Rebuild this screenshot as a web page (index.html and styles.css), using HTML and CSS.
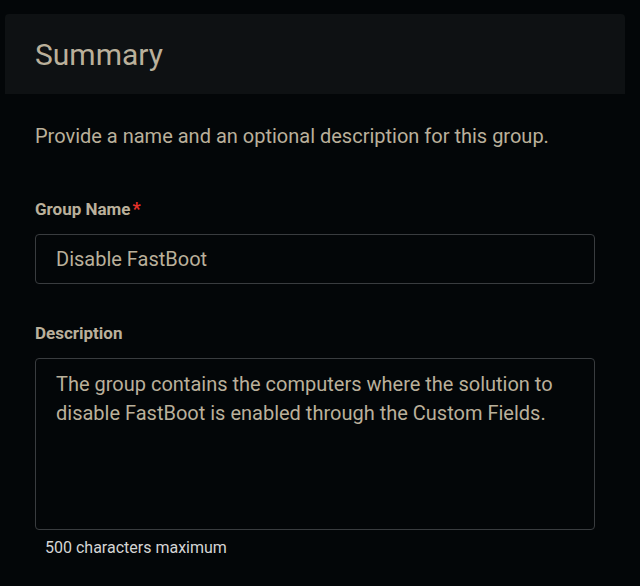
FILE: index.html
```html
<!DOCTYPE html>
<html>
<head>
<meta charset="utf-8">
<link rel="stylesheet" href="styles.css">
</head>
<body>
<div class="panel">
  <div class="panel-header">
    <h2 class="title">Summary</h2>
  </div>
  <div class="panel-body">
    <p class="intro">Provide a name and an optional description for this group.</p>
    <div class="field">
      <label class="label">Group Name<span class="req">*</span></label>
      <div class="input">Disable FastBoot</div>
    </div>
    <div class="field">
      <label class="label">Description</label>
      <div class="textarea">The group contains the computers where the solution to disable FastBoot is enabled through the Custom Fields.</div>
      <div class="hint">500 characters maximum</div>
    </div>
  </div>
</div>
</body>
</html>
```
FILE: styles.css
```css
html, body {
  margin: 0;
  padding: 0;
  background: #030608;
  font-family: Roboto, "Liberation Sans", sans-serif;
  color: #bab09b;
}
.panel {
  padding: 14px 15px 0 5px;
}
.panel-header {
  background: #0e1113;
  border-radius: 4px 4px 0 0;
  height: 80px;
  display: flex;
  align-items: center;
  padding-left: 30px;
}
.title {
  margin: 0;
  font-size: 30px;
  font-weight: 400;
  color: #bab09b;
}
.panel-body {
  padding: 0 30px;
}
.intro {
  margin: 30px 0 0;
  font-size: 20px;
  line-height: 24px;
}
.label {
  display: block;
  font-weight: 700;
  font-size: 17px;
  line-height: 20px;
  margin-top: 51px;
  margin-bottom: 15px;
}
.req {
  color: #e8312a;
  margin-left: 2px;
  font-size: 18px;
}
.input {
  border: 1px solid #393c3f;
  border-radius: 4px;
  box-sizing: border-box;
  height: 50px;
  padding: 0 20px;
  display: flex;
  align-items: center;
  font-size: 20px;
}
.field + .field .label {
  margin-top: 39px;
}
.textarea {
  border: 1px solid #393c3f;
  border-radius: 4px;
  height: 172px;
  box-sizing: border-box;
  padding: 11px 20px;
  font-size: 20px;
  line-height: 29px;
}
.hint {
  font-size: 16px;
  line-height: 20px;
  color: #d5d5d5;
  margin-top: 8px;
  padding-left: 10px;
}
```
